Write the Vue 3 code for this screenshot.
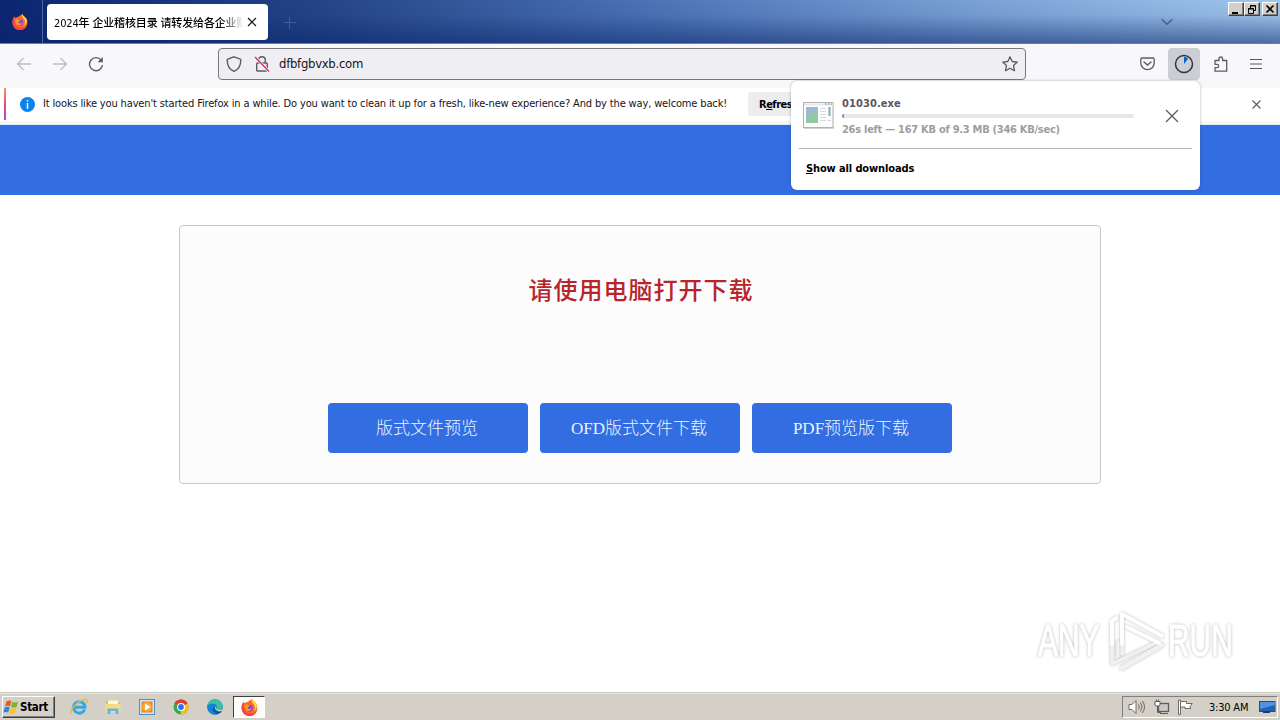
<script setup>
const message = "It looks like you haven't started Firefox in a while. Do you want to clean it up for a fresh, like-new experience? And by the way, welcome back!"
const buttons = ['版式文件预览', 'OFD版式文件下载', 'PDF预览版下载']
const progress = 0.8
</script>

<template>
  <div class="screen">
    <svg class="defs" width="0" height="0">
      <defs>
        <symbol id="firefox" viewBox="0 0 16 16">
          <path d="M8 1.500C10 .8 9.700 .2 10.300 0c.4 1.500 3 2.500 4.300 5 2.400 5-1 11-6.600 11S-.2 11.500.600 6.500C.9 4.400 1.700 3.300 2.500 2.300c.1 1 .4 1.300.8 1.700C4.500 3 6 3.500 8 1.500z" fill="#ff6a2a" />
          <path d="M10.300 0c-.9 2 .3 3.200 1.600 5 1.500 2 1.600 4.500.2 6.300 2-.6 3-3 2.800-5C14.500 3.500 11 2.500 10.300 0z" fill="#ffd93b" />
          <path d="M.7 6.500C0 11.500 3.500 16 8 16c3.500 0 6-2 7-5-2 2.500-5 3.300-8 2.300C3.500 12.200 2 9 3.300 4 2 4.500 1 5 .7 6.500z" fill="#fb4148" />
          <circle cx="8" cy="8.600" r="3.200" fill="#8a45c8" />
          <path d="M3.300 5.500c2-.9 3.200.4 4.900.7-.2 1.200-1.900 1.200-2 2.200 1 1.700 3 .8 4 .3-.6 2.500-3.500 3.300-5.500 1.800C3.400 9.400 2.900 7.300 3.300 5.500z" fill="#ff9b22" />
        </symbol>
      </defs>
    </svg>

    <header class="titlebar">
      <div class="fx-tab"><svg width="16" height="16"><use href="#firefox" /></svg></div>
      <div class="tab">
        <span class="tab-title">2024年 企业稽核目录 请转发给各企业财</span>
        <svg class="tab-close" width="10" height="10" viewBox="0 0 10 10"><path d="M1 1l8 8M9 1L1 9" stroke="#15141a" stroke-width="1.200" /></svg>
      </div>
      <svg class="new-tab" width="12" height="12" viewBox="0 0 12 12"><path d="M5.500 0v12M0 5.500h12" stroke="#4b5d86" /></svg>
      <svg class="all-tabs" width="12" height="8" viewBox="0 0 12 8"><path d="M.7 1.200L6 6.300l5.300-5.100" fill="none" stroke="#43618f" stroke-width="1.500" /></svg>
      <div class="win-controls">
        <span class="win-btn"><svg width="15" height="13"><path d="M3 10h6" stroke="#000" stroke-width="2" /></svg></span>
        <span class="win-btn"><svg width="15" height="13"><path d="M5.500 5V2.500h5v5H9M5 3h6" fill="none" stroke="#000" /><path d="M3.500 5.500h5v5h-5zM3 6h6" fill="none" stroke="#000" /></svg></span>
        <span class="win-btn last"><svg width="15" height="13"><path d="M3.500 2.500l7 7M10.500 2.500l-7 7" stroke="#000" stroke-width="1.700" /></svg></span>
      </div>
    </header>

    <nav class="toolbar">
      <div class="nav-icons">
        <svg width="16" height="16" viewBox="0 0 16 16" fill="none" stroke="#bdbcc3" stroke-width="1.300"><path d="M15 8H1.500M7.500 2L1.500 8l6 6" /></svg>
        <svg width="16" height="16" viewBox="0 0 16 16" fill="none" stroke="#bdbcc3" stroke-width="1.300"><path d="M1 8h13.500M8.500 2l6 6-6 6" /></svg>
        <svg width="16" height="16" viewBox="0 0 16 16" fill="none" stroke="#5b5b66" stroke-width="1.400"><path d="M13.200 4.200A6.500 6.500 0 1 0 14.500 9" /><path d="M14.800 1v5.300H9.500z" fill="#5b5b66" stroke="none" /></svg>
      </div>
      <div class="urlbar">
        <svg width="16" height="16" viewBox="0 0 16 16" fill="none" stroke="#5b5b66" stroke-width="1.400"><path d="M8 .8l6.300 2.400c.3.100.5.400.5.700 0 5.500-1.800 9.300-6.800 11.400C3 13.200 1.200 9.400 1.200 3.900c0-.3.200-.6.500-.7z" /></svg>
        <svg class="lock" width="16" height="16" viewBox="0 0 16 16" fill="none" stroke="#5b5b66" stroke-width="1.400"><rect x="2.700" y="7" width="10.600" height="8" rx="1" /><path d="M4.700 7V4a3.300 3.300 0 0 1 6.600 0v3" /><path d="M1 1l14 14.500" stroke="#efeef3" stroke-width="3" /><path d="M1 1l14 14.500" stroke="#e22850" stroke-width="1.300" /></svg>
        <span class="url">dfbfgbvxb.com</span>
        <svg class="star" width="16" height="16" viewBox="0 0 16 16" fill="none" stroke="#5b5b66" stroke-width="1.300" stroke-linejoin="round"><path d="M8 .8l2.200 4.700 5.100.6-3.800 3.500 1 5.100L8 12.200l-4.500 2.500 1-5.100L.7 6.100l5.100-.6z" /></svg>
      </div>
      <div class="tools">
        <svg class="pocket" width="15" height="14" viewBox="0 0 15 14" fill="none" stroke="#5b5b66" stroke-width="1.300"><path d="M2 1h11a1.200 1.200 0 0 1 1.200 1.200V6A6.700 6.700 0 0 1 .8 6V2.200A1.200 1.200 0 0 1 2 1z" /><path d="M4 5l3.500 3L11 5" stroke-linecap="round" stroke-width="1.500" /></svg>
        <span class="dl-btn"><svg width="20" height="20" viewBox="0 0 20 20"><circle cx="10" cy="10" r="8.500" fill="none" stroke="#2e3440" stroke-width="1.500" /><path d="M10 10V3a7 7 0 0 1 4.100 1.400z" fill="#0061d5" /></svg></span>
        <svg class="ext" width="16" height="16" viewBox="0 0 16 16" fill="none" stroke="#5b5b66" stroke-width="1.300" stroke-linejoin="round"><path d="M2 4.500h4V2.800a1.800 1.800 0 0 1 3.600 0v1.700h4.100v10.700H2v-3.500h2a1.700 1.700 0 0 0 0-3.400H2V7z" /></svg>
        <svg class="menu" width="12" height="12" viewBox="0 0 12 12"><path d="M0 1.500h12M0 6h12M0 10.500h12" stroke="#5b5b66" stroke-width="1.200" /></svg>
      </div>
    </nav>

    <div class="notice">
      <i class="stripe"></i>
      <svg class="info" width="15" height="15" viewBox="0 0 15 15"><circle cx="7.500" cy="7.500" r="7.500" fill="#0a84e8" /><path d="M7.500 3v1.600M7.500 6v5.800" stroke="#fff" stroke-width="1.400" /></svg>
      <span class="notice-text">{{ message }}</span>
      <button class="refresh">R<u>e</u>fresh Firefox…</button>
      <svg class="notice-close" width="9" height="9" viewBox="0 0 9 9"><path d="M.5.5l8 8M8.500.5l-8 8" stroke="#5b5b66" stroke-width="1.100" /></svg>
    </div>

    <main class="page">
      <div class="banner"></div>
      <section class="card">
        <h1>请使用电脑打开下载</h1>
        <div class="actions">
          <a v-for="b in buttons" :key="b">{{ b }}</a>
        </div>
      </section>
    </main>

    <aside class="downloads">
      <div class="item">
        <svg class="exe" width="31" height="27" viewBox="0 0 31 27">
          <rect x=".5" y=".5" width="29.500" height="25" fill="#fdfdfd" stroke="#b3b1af" />
          <path d="M1 26.500h29.500V2" fill="none" stroke="#d3d1cf" />
          <path d="M1 2.500h29" stroke="#e8e8e8" stroke-width="2" />
          <path d="M22 2h1.500M25 2h1.500M28 2h1" stroke="#98a1ac" stroke-width="1.500" />
          <rect x="3" y="5" width="12" height="16" fill="#9bb9d3" />
          <path d="M3 15l5-4 7-2v12H3z" fill="#94c7a8" />
          <path d="M17 6.500h6M17 9.500h6M17 12.500h6M17 15.500h6M17 18.500h6" stroke="#d4d9dc" />
          <path d="M26.500 5v9" stroke="#86a8b5" stroke-width="2" /><path d="M25 18.500h3" stroke="#ccc" />
        </svg>
        <div class="info-col">
          <div class="fname">01030.exe</div>
          <div class="bar"><i :style="{ width: progress + '%' }"></i></div>
          <div class="status">26s left — 167 KB of 9.3 MB (346 KB/sec)</div>
        </div>
        <svg class="cancel" width="14" height="14" viewBox="0 0 14 14"><path d="M1 1l12 12M13 1L1 13" stroke="#5b5b66" stroke-width="1.300" /></svg>
      </div>
      <div class="show-all"><u>S</u>how all downloads</div>
    </aside>

    <div class="watermark">
      <span class="any">ANY</span>
      <svg width="60" height="66" viewBox="0 0 60 66" fill="none" stroke-linecap="round" stroke-linejoin="round">
        <g stroke="#f1f1f1" stroke-width="3.500"><path d="M5 34v22l46-22" /><path d="M11 34v14" /><path d="M15 60l40-23" stroke-width="4.500" /><path d="M15 34v12" /></g>
        <g stroke="#fff" stroke-width="4"><path d="M5 36V13l4-3" /><path d="M15 36V6l40 22" /><path d="M20 19l32 16" /></g>
      </svg>
      <span class="run">RUN</span>
    </div>

    <footer class="taskbar">
      <div class="start">
        <svg width="17" height="16" viewBox="0 0 17 16">
          <path d="M3.500 2.500C5.500 1 7 1.500 8.500 2.300L7 7.500C5.500 6.700 4 6.500 2 7.500z" fill="#ee5a24" />
          <path d="M9.500 2.800c2 1 3.500 1 5.500 0L13.500 8c-2 1-3.500.9-5.500 0z" fill="#76b82a" />
          <path d="M1.700 8.500c2-1 3.500-.8 5 0L5.300 13.600c-1.600-.8-3-.9-5 0z" fill="#2f86dd" />
          <path d="M7.700 9c2 1 3.500 1 5.500 0l-1.500 5.200c-2 1-3.500.9-5.400 0z" fill="#fbc02d" />
        </svg>
        <b>Start</b>
      </div>
      <div class="launch">
        <svg width="18" height="18" viewBox="0 0 18 18"><path d="M14.600 11.500A5.700 5.700 0 1 1 15 9.300H5" fill="none" stroke="#35a7e6" stroke-width="3" /><path d="M1 16C-.5 12 7 3 15 1.300c3-.3 2 2.700 1 3.700" fill="none" stroke="#e9b93a" stroke-width="1.300" /></svg>
        <svg width="18" height="18" viewBox="0 0 18 18"><path d="M2 3h5l1 1.500h8V14H2z" fill="#e5bd58" /><path d="M4 2.500h10V9H4z" fill="#fff8d8" /><path d="M1.500 6h15v8h-15z" fill="#f5dc83" /><path d="M3.500 16v-5.500h11V16h-3v-3h-5v3z" fill="#69b5df" /></svg>
        <svg width="18" height="18" viewBox="0 0 18 18"><rect x="1.500" y="1.500" width="15" height="15" fill="#cfe4f7" stroke="#4d91ca" /><rect x="3.500" y="3.500" width="11" height="11" fill="#f28a1c" /><circle cx="9" cy="9" r="4.600" fill="#f9aa42" /><path d="M7 5.500l5.500 3.500L7 12.500z" fill="#fff" /></svg>
        <svg width="18" height="18" viewBox="0 0 18 18"><circle cx="9" cy="9" r="7.500" fill="#35a853" /><path d="M9 9L2.500 5.200A7.500 7.500 0 0 1 15.500 5.200z" fill="#e33b2e" /><path d="M9 9l6.500-3.800A7.500 7.500 0 0 1 8.700 16.500z" fill="#fbc116" /><path d="M2.500 5.200h13L9 9z" fill="#e33b2e" /><circle cx="9" cy="9" r="4" fill="#fff" /><circle cx="9" cy="9" r="2.900" fill="#2f75e8" /></svg>
        <svg width="18" height="18" viewBox="0 0 18 18"><circle cx="9" cy="9" r="7.800" fill="#1677c5" /><path d="M1.300 8C2.500-.5 15.500-1 16.800 8c0 3.500-4.500 4-6.500 2.700 2.500-4.700-4.500-7-9-2.700z" fill="#38c2a4" /><path d="M1.300 8c4-4 8-2 8 .5-2 0-3 1-2.500 3.300.6 2 3 4 6.500 3.500-4 3-12 .7-12-7.300z" fill="#1683d4" /><path d="M8.500 8.600c-1.500 3 2 6.400 6.800 4.700l.7.200c-3 3.500-9 2-9.500-2.300z" fill="#0c4f91" /><path d="M10.200 8.500c.4 1.500-1 1.800.3 2.500s4 .8 6 .3l-.8 1.700c-3 .8-7.200-.7-6.500-4z" fill="#d5d2cb" /></svg>
        <span class="active"><svg width="17" height="17"><use href="#firefox" /></svg></span>
      </div>
      <div class="tray">
        <svg width="18" height="16" viewBox="0 0 18 16" fill="#fff" stroke="#6c6a66"><path d="M1 5.500h3l4-4v13l-4-4H1z" /><path d="M10.500 5.500q1.500 2.500 0 5M12.500 3.500q3 4.500 0 9M14.500 2q4 6 0 12" fill="none" /></svg>
        <svg width="17" height="16" viewBox="0 0 17 16" stroke="#5f5d59"><rect x="5.500" y="4.500" width="10" height="8" fill="#c9c8c5" stroke-width="1.300" /><path d="M7 14.500h8M4.500 7v6.500H8" fill="none" /><path d="M2 2.500h5v3.500l-1 1H3L2 6zM3.500.5v2M5.500.5v2" fill="#fff" /></svg>
        <svg width="17" height="16" viewBox="0 0 17 16" fill="#fff" stroke="#6c6a66"><path d="M1.500 1v14.500h2V1z" /><path d="M3.500 2.500h6v2h5.800L13 7.500l.7 2H8v-1.500H3.500z" /></svg>
        <span class="clock">3:30 AM</span>
        <svg class="desk" width="17" height="16" viewBox="0 0 17 16"><rect x=".5" y="2.500" width="15.500" height="10" fill="#2463b9" stroke="#244d87" /><path d="M1 3h15v3L1 10z" fill="#4f94dc" /><path d="M4 12h7v2H4z" fill="#173b77" /></svg>
      </div>
    </footer>
  </div>
</template>

<style>
html, body { margin: 0; overflow: hidden; background: #fff; }
</style>

<style scoped>
.screen { position: relative; width: 1280px; height: 720px; display: flex; flex-direction: column; background: #fff; overflow: hidden; font-family: "DejaVu Sans Condensed", "DejaVu Sans", "Noto Sans CJK SC", sans-serif; font-stretch: condensed; font-size: 11px; color: #15141a; }
.screen svg { display: block; flex: none; }
.defs { position: absolute; }
.titlebar { height: 44px; flex: none; box-sizing: border-box; display: flex; align-items: flex-start; border-bottom: 1px solid #6e7f9f; background: linear-gradient(180deg, rgba(10,36,106,0) 0%, rgba(10,36,106,.06) 35%, rgba(10,36,106,.55) 100%), linear-gradient(90deg, #0b2670 0%, #244487 25%, #4a72b4 50%, #789fd4 75%, #a0c6ec 100%); }
.fx-tab { width: 43px; height: 43px; box-sizing: border-box; border-right: 1px solid #52669a; padding: 14px 0 0 12px; }
.tab { margin: 4px 0 0 4px; width: 221px; height: 36px; border-radius: 4px; background: #fff; display: flex; align-items: center; box-sizing: border-box; padding-left: 7px; }
.tab-title { width: 192px; overflow: hidden; white-space: nowrap; letter-spacing: -.15px; mask-image: linear-gradient(90deg, #000 166px, transparent 190px); color: #000; font-weight: 500; }
.tab-close { margin-left: 1px; }
.new-tab { margin: 17px 0 0 16px; }
.all-tabs { margin: 18px 0 0 auto; }
.win-controls { margin: 2px 2px 0 55px; display: flex; }
.win-btn { width: 16px; height: 14px; box-sizing: border-box; background: #d4d0c8; border: 1px solid; border-color: #fff #404040 #404040 #fff; box-shadow: inset -1px -1px #808080; }
.win-btn.last { margin-left: 2px; }
.toolbar { height: 40px; padding-bottom: 1px; flex: none; background: #f8f8fb; display: flex; align-items: center; }
.nav-icons { width: 218px; display: flex; gap: 20px; padding-left: 16px; box-sizing: border-box; }
.urlbar { width: 808px; height: 32px; box-sizing: border-box; border: 1px solid #77767e; border-radius: 4px; background: #efeef3; display: flex; align-items: center; padding: 0 7px 1px; }
.lock { margin-left: 12px; }
.url { margin-left: 9px; font-size: 13px; letter-spacing: -.3px; }
.star { margin-left: auto; }
.tools { display: flex; align-items: center; margin-left: auto; padding-right: 18px; }
.dl-btn { width: 32px; height: 32px; border-radius: 4px; background: #cdced5; display: grid; place-items: center; margin: 0 13px; padding-bottom: 0; }
.ext { margin-right: 21px; }
.notice { height: 40px; flex: none; box-sizing: border-box; border-top: 3px solid #f8f8f8; border-bottom: 1px solid #dcebf4; background: linear-gradient(#fff 33px, #efeee7 34px, #fafafa 35px); display: flex; align-items: center; padding: 0 19px 4px 4px; }
.stripe { width: 2px; height: 32px; background: linear-gradient(#f4975f, #f0468f 50%, #a64ad8); }
.info { margin-left: 14px; }
.notice-text { margin-left: 8px; width: 705px; white-space: nowrap; letter-spacing: -.145px; padding-bottom: 2px; color: #15141a; }
.refresh { width: 112px; height: 24px; flex: none; border: 0; border-radius: 3px; background: #ededef; padding: 0 0 0 11px; text-align: left; font: bold 11px "DejaVu Sans Condensed", "DejaVu Sans", sans-serif; letter-spacing: -.5px; color: #000; white-space: nowrap; }
.notice-close { margin-left: auto; }
.page { flex: 1; background: #fff; }
.banner { height: 70px; background: #336de2; }
.card { width: 922px; height: 259px; box-sizing: border-box; margin: 30px auto 0; border: 1px solid #c9c9c9; border-radius: 4px; background: #fcfcfc; display: flex; flex-direction: column; align-items: center; font-family: "Liberation Serif", "Noto Sans CJK SC", serif; }
h1 { margin: 47px 0 0 2px; height: 36px; line-height: 36px; font-size: 24px; font-weight: 500; letter-spacing: 1px; color: #b7252b; white-space: nowrap; }
.actions { margin-top: 94px; display: flex; gap: 12px; }
.actions a { box-sizing: border-box; width: 200px; height: 50px; padding: 2px 2px 0 0; line-height: 48px; border-radius: 4px; background: #336de2; color: #e9f5ff; font-size: 17px; font-weight: 300; text-align: center; }
.downloads { position: absolute; left: 791px; top: 81px; width: 409px; height: 109px; box-sizing: border-box; border-radius: 6px; background: #fff; box-shadow: 0 0 3px rgba(60,60,80,.4); padding: 0 8px; }
.item { height: 68px; box-sizing: border-box; border-bottom: 1px solid #b5b5b7; display: flex; align-items: flex-start; }
.exe { margin: 21px 0 0 4px; }
.info-col { margin: 16px 0 0 8px; width: 292px; white-space: nowrap; font-weight: bold; }
.fname { height: 14px; line-height: 14px; letter-spacing: .1px; color: #58585e; }
.bar { margin-top: 3px; height: 4px; border-radius: 2px; background: #e7e7e8; overflow: hidden; }
.bar i { display: block; height: 4px; background: #5c93c6; }
.status { margin-top: 5px; line-height: 14px; letter-spacing: -.27px; color: #9d9da0; }
.cancel { margin: 28px 0 0 31px; }
.show-all { padding: 13px 0 0 7px; line-height: 14px; font-weight: bold; letter-spacing: -.12px; color: #000; }
.watermark { position: absolute; left: 1038px; top: 608px; display: flex; align-items: center; color: #fff; filter: drop-shadow(0 0 1.500px rgba(0,0,0,.28)); font: 44px "Liberation Sans", sans-serif; }
.watermark span { display: block; transform: scaleX(.68); transform-origin: left; white-space: nowrap; width: 69px; -webkit-text-stroke: 1px #fff; background: none; }
.watermark .run { margin-left: 1px; }
.taskbar { height: 27px; flex: none; box-sizing: border-box; background: #d4d0c8; border-top: 1px solid #e5e5e1; box-shadow: 0 -1px #c9c9c5; display: flex; align-items: center; padding: 0 2px; }
.start { width: 53px; height: 22px; box-sizing: border-box; border: 1px solid; border-color: #fff #404040 #404040 #fff; box-shadow: inset -1px -1px #808080; display: flex; align-items: center; padding-left: 0; color: #000; }
.start b { letter-spacing: 0; font-size: 11.500px; letter-spacing: -.3px; }
.launch { display: flex; align-items: center; gap: 16px; margin-left: 15px; }
.active { width: 32px; height: 22px; box-sizing: border-box; background: #fcfcfb; border: 1px solid; border-color: #404040 #fff #fff #404040; display: grid; place-items: center; margin-left: -7px; }
.tray { margin-left: auto; width: 156px; height: 22px; box-sizing: border-box; border: 1px solid; border-color: #808080 #fff #fff #808080; display: flex; align-items: center; gap: 7px; padding-left: 5px; color: #000; }
.clock { margin-left: 8px; width: 43px; white-space: nowrap; letter-spacing: -.2px; }
</style>
